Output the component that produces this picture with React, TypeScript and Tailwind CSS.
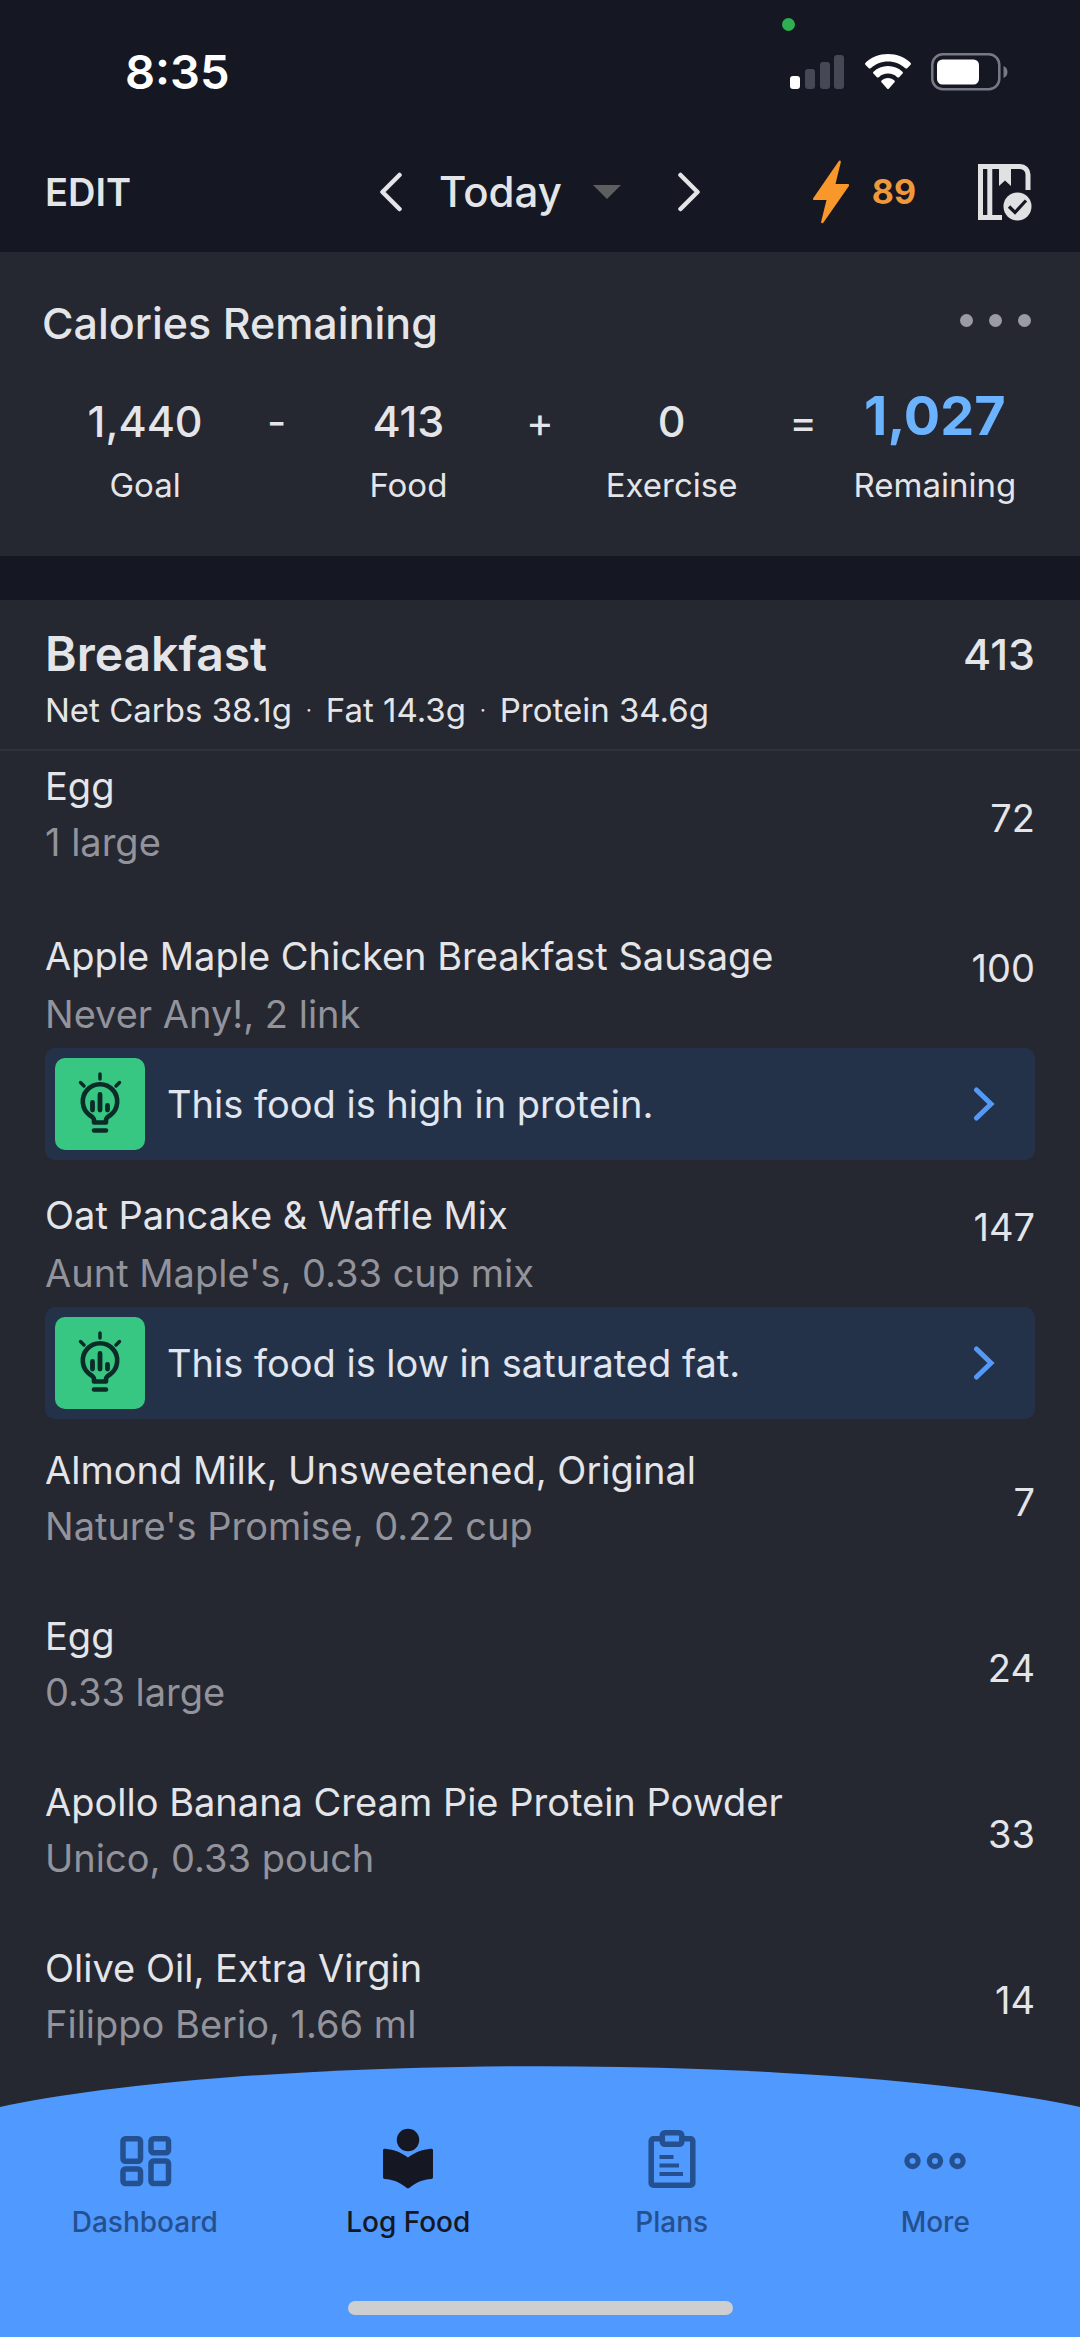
import React from "react";

type Food = {
  name: string;
  detail: string;
  calories: number;
  insight?: string;
};

const foods: Food[] = [
  { name: "Egg", detail: "1 large", calories: 72 },
  {
    name: "Apple Maple Chicken Breakfast Sausage",
    detail: "Never Any!, 2 link",
    calories: 100,
    insight: "This food is high in protein.",
  },
  {
    name: "Oat Pancake & Waffle Mix",
    detail: "Aunt Maple's, 0.33 cup mix",
    calories: 147,
    insight: "This food is low in saturated fat.",
  },
  { name: "Almond Milk, Unsweetened, Original", detail: "Nature's Promise, 0.22 cup", calories: 7 },
  { name: "Egg", detail: "0.33 large", calories: 24 },
  { name: "Apollo Banana Cream Pie Protein Powder", detail: "Unico, 0.33 pouch", calories: 33 },
  { name: "Olive Oil, Extra Virgin", detail: "Filippo Berio, 1.66 ml", calories: 14 },
];

function Chevron({ left = false }: { left?: boolean }) {
  return (
    <svg width="24" height="40" viewBox="0 0 24 40" fill="none" stroke="currentColor" strokeWidth="4.5" strokeLinecap="round" strokeLinejoin="round" aria-hidden="true">
      <path d={left ? "M20.5 3L3.5 20l17 17" : "M3.5 3l17 17-17 17"} />
    </svg>
  );
}

function StatusBar() {
  return (
    <div className="relative flex h-[136px] items-center justify-between pt-2 pr-[72px] pl-[125px]">
      <span className="text-[47px] leading-[56px] font-semibold text-white">8:35</span>
      <span className="absolute top-[18px] right-[285px] size-[13px] rounded-full bg-[#2fae53]" />
      <div className="flex items-center gap-5">
        <svg width="55" height="36" viewBox="0 0 55 36" aria-hidden="true">
          <rect x="0" y="22" width="10" height="13" rx="3" fill="#fff" />
          <rect x="15" y="15" width="10" height="20" rx="3" fill="#464855" />
          <rect x="30" y="8" width="10" height="27" rx="3" fill="#464855" />
          <rect x="44" y="1" width="10" height="34" rx="3" fill="#464855" />
        </svg>
        <svg width="46" height="36" viewBox="0 0 46 36" fill="#fff" aria-hidden="true">
          <path d="M23 0C14.200 0 6.300 3.300.5 8.700c-.6.600-.6 1.400-.1 2l3.400 3.500c.5.500 1.300.500 1.900 0C10.200 10 16.300 7.400 23 7.400s12.800 2.600 17.300 6.800c.6.500 1.400.5 1.900 0l3.400-3.500c.5-.6.500-1.400-.1-2C39.700 3.300 31.800 0 23 0z" />
          <path d="M23 12c-5.600 0-10.700 2.200-14.500 5.700-.6.500-.6 1.400-.1 1.900l3.500 3.600c.5.500 1.300.500 1.900 0 2.400-2.200 5.600-3.600 9.200-3.600s6.800 1.400 9.200 3.600c.6.500 1.400.5 1.900 0l3.500-3.600c.5-.5.5-1.400-.1-1.900C33.700 14.200 28.600 12 23 12z" />
          <path d="M23 24c-2.500 0-4.700.9-6.400 2.400-.6.500-.6 1.300-.1 1.900l5.500 6.100c.6.700 1.400.7 2 0l5.500-6.100c.5-.6.5-1.400-.1-1.900C27.700 24.900 25.500 24 23 24z" />
        </svg>
        <svg width="77" height="38" viewBox="0 0 77 38" aria-hidden="true">
          <rect x="1.300" y="1.300" width="67" height="35" rx="10.500" fill="none" stroke="#777986" strokeWidth="2.500" />
          <rect x="6" y="6.500" width="42" height="25" rx="5.500" fill="#fff" />
          <path d="M72.500 13c2.500 1 4 3.300 4 6s-1.500 5-4 6z" fill="#777986" />
        </svg>
      </div>
    </div>
  );
}

function Toolbar() {
  return (
    <div className="grid h-[116px] grid-cols-[1fr_auto_1fr] items-center px-[45px] pb-1">
      <button type="button" className="justify-self-start text-[38px] leading-[48px] font-semibold">
        EDIT
      </button>
      <div className="flex items-center">
        <button type="button" aria-label="Previous day">
          <Chevron left />
        </button>
        <button type="button" className="mr-14 ml-9 flex items-center gap-[31px] text-[42px] leading-[56px] font-medium">
          Today
          <svg width="28" height="14" viewBox="0 0 28 14" fill="#5c5e60" aria-hidden="true">
            <path d="M0 0h28L14 14z" />
          </svg>
        </button>
        <button type="button" aria-label="Next day">
          <Chevron />
        </button>
      </div>
      <div className="flex items-center gap-[62px] justify-self-end pr-[3px]">
        <button type="button" className="flex items-center gap-[23px] text-[34px] leading-[40px] font-bold text-[#f0993a]">
          <svg width="36" height="64" viewBox="0 0 36 64" fill="#f8982a" aria-hidden="true">
            <path d="M25.500 1.500c.6-1.500 2.600-1 2.300.7L22.500 24H35c1 0 1.500 1 .9 1.900L10.500 62.500c-1 1.300-2.700.6-2.300-1L13.500 40H1.200C.2 40-.3 39.100.2 38.200z" />
          </svg>
          89
        </button>
        <button type="button" aria-label="Complete diary">
          <svg width="54" height="58" viewBox="0 0 54 58" aria-hidden="true">
            <path d="M2.500 3.500H42a8 8 0 0 1 8 8V27M2.500 1v56M0 54.500h24" fill="none" stroke="#e0e1e2" strokeWidth="5" />
            <path d="M11.800 3v52" stroke="#e0e1e2" strokeWidth="5" />
            <path d="M21 2h12v21l-6-5.500-6 5.500z" fill="#e0e1e2" />
            <circle cx="39.500" cy="43.500" r="17" fill="#151722" />
            <circle cx="39.500" cy="43.500" r="14" fill="#e0e1e2" />
            <path d="M31 43.500l6 6 11-12" fill="none" stroke="#151722" strokeWidth="3.200" />
          </svg>
        </button>
      </div>
    </div>
  );
}

function Stat({ value, label, highlight = false }: { value: string; label: string; highlight?: boolean }) {
  return (
    <div className="flex flex-col items-center">
      <dd
        className={
          highlight
            ? "flex h-14 items-center pb-3 text-[54px] font-bold text-[#6cb3ff]"
            : "flex h-14 items-center text-[43px] font-medium"
        }
      >
        {value}
      </dd>
      <dt className="order-last mt-4 text-[33px] leading-[40px]">{label}</dt>
    </div>
  );
}

function Operator({ children }: { children: string }) {
  return <span className="flex h-14 items-center justify-center text-[42px]">{children}</span>;
}

function CaloriesCard() {
  return (
    <section className="bg-[#252731] px-[42px] pt-[41px] pb-[51px]">
      <div className="flex items-center justify-between">
        <h2 className="text-[43px] leading-[60px] font-medium">Calories Remaining</h2>
        <button type="button" aria-label="More options" className="flex gap-4 pr-[7px] pb-[6px]">
          <span className="size-[13px] rounded-full bg-[#9b9ca3]" />
          <span className="size-[13px] rounded-full bg-[#9b9ca3]" />
          <span className="size-[13px] rounded-full bg-[#9b9ca3]" />
        </button>
      </div>
      <dl className="mt-10 grid grid-cols-[200fr_63fr_200fr_63fr_200fr_63fr_200fr] px-[3px]">
        <Stat value="1,440" label="Goal" />
        <Operator>-</Operator>
        <Stat value="413" label="Food" />
        <Operator>+</Operator>
        <Stat value="0" label="Exercise" />
        <Operator>=</Operator>
        <Stat value="1,027" label="Remaining" highlight />
      </dl>
    </section>
  );
}

function InsightIcon() {
  return (
    <span className="flex h-[92px] w-[90px] items-center justify-center rounded-[10px] bg-[#37c783] text-[#0b2b26]">
      <svg width="46" height="64" viewBox="0 0 46 64" fill="none" stroke="currentColor" strokeLinecap="round" strokeLinejoin="round" aria-hidden="true">
        <path d="M23 2v5M3.500 10.500l3.500 3.500M42.500 10.500l-3.500 3.500" strokeWidth="3.500" />
        <path d="M17 50.500v-2.500c0-2.200-1.800-3.200-4.200-4.700A17.200 17.200 0 1 1 33.200 43.300c-2.400 1.500-4.200 2.500-4.200 4.700v2.500z" strokeWidth="4.600" />
        <path d="M15.500 30.500v7.500M23 22.500v15.500M30.500 33.500v4.500" strokeWidth="4.800" />
        <path d="M17 58.500h12" strokeWidth="4.600" />
      </svg>
    </span>
  );
}

function FoodRow({ food }: { food: Food }) {
  if (food.insight) {
    return (
      <li className="px-[45px]">
        <div className="flex justify-between pt-[26px] pb-[5px] text-[38px] leading-[58px]">
          <div>
            <h3>{food.name}</h3>
            <p className="text-[#92939b]">{food.detail}</p>
          </div>
          <span className="pt-3">{food.calories}</span>
        </div>
        <button type="button" className="flex h-28 w-full items-center rounded-[10px] bg-[#243249] pr-10 pl-[10px] text-left text-[38px] text-[#e0e6f0]">
          <InsightIcon />
          <span className="ml-[22px] flex-1">{food.insight}</span>
          <svg width="22" height="34" viewBox="0 0 22 34" fill="none" stroke="#5599f7" strokeWidth="5" strokeLinecap="round" aria-hidden="true">
            <path d="M3.500 3L18 17 3.500 31" />
          </svg>
        </button>
      </li>
    );
  }
  return (
    <li className="flex h-[166px] items-center justify-between px-[45px] text-[38px] leading-[56px]">
      <div className="pb-2">
        <h3>{food.name}</h3>
        <p className="text-[#92939b]">{food.detail}</p>
      </div>
      <span>{food.calories}</span>
    </li>
  );
}

function Macros() {
  return (
    <p className="flex items-center gap-[14px] text-[33px] leading-[52px]">
      <span>Net Carbs 38.1g</span>
      <span className="text-[20px]">·</span>
      <span>Fat 14.3g</span>
      <span className="text-[20px]">·</span>
      <span>Protein 34.6g</span>
    </p>
  );
}

function Breakfast() {
  return (
    <section className="bg-[#252731]">
      <header className="flex h-[151px] justify-between border-b-2 border-[#30323d] px-[45px] pt-6">
        <div>
          <h2 className="text-[48px] leading-[60px] font-semibold">Breakfast</h2>
          <Macros />
        </div>
        <span className="text-[43px] leading-[60px] font-medium">413</span>
      </header>
      <ul className="-mt-4">
        {foods.map((food, i) => (
          <FoodRow key={i} food={food} />
        ))}
      </ul>
    </section>
  );
}

function DashboardIcon() {
  return (
    <svg width="64" height="64" viewBox="0 0 64 64" fill="none" stroke="currentColor" strokeWidth="5.500" aria-hidden="true">
      <rect x="10" y="10.700" width="17.500" height="22.500" rx="2.500" />
      <rect x="38" y="10.700" width="17.500" height="14" rx="2.500" />
      <rect x="10" y="41" width="17.500" height="14.500" rx="2.500" />
      <rect x="38" y="33" width="17.500" height="22.500" rx="2.500" />
    </svg>
  );
}

function LogFoodIcon() {
  return (
    <svg width="64" height="64" viewBox="0 0 64 64" fill="currentColor" aria-hidden="true">
      <circle cx="32" cy="12" r="11.200" />
      <path d="M7 22.500c0-1.300.8-2 2.100-1.800C18 21.500 25.500 24.500 32 29.500c6.500-5 14-8 22.900-8.800 1.300-.2 2.100.5 2.100 1.800V49c0 1.200-.7 1.900-1.900 2-7.600.4-14.300 3-21.600 8.700-1 .8-2 .8-3 0C23.200 54 16.500 51.400 8.900 51 7.700 50.900 7 50.200 7 49z" />
    </svg>
  );
}

function PlansIcon() {
  return (
    <svg width="64" height="64" viewBox="0 0 64 64" fill="none" stroke="currentColor" strokeWidth="5.500" aria-hidden="true">
      <path d="M21 10.700H13.500a2.300 2.300 0 0 0-2.300 2.300v42a2.300 2.300 0 0 0 2.300 2.300h37a2.300 2.300 0 0 0 2.300-2.300V13a2.300 2.300 0 0 0-2.300-2.300H43" />
      <rect x="22.300" y="4.700" width="19.500" height="11.500" rx="2.500" />
      <path d="M19.500 29h14M19.500 37.500H39M19.500 46h23.500" strokeWidth="4.200" />
    </svg>
  );
}

function MoreIcon() {
  return (
    <svg width="64" height="64" viewBox="0 0 64 64" fill="none" stroke="currentColor" strokeWidth="5.200" aria-hidden="true">
      <circle cx="9.500" cy="33" r="5.600" />
      <circle cx="32" cy="33" r="5.600" />
      <circle cx="54.500" cy="33" r="5.600" />
    </svg>
  );
}

const tabs = [
  { label: "Dashboard", Icon: DashboardIcon, active: false },
  { label: "Log Food", Icon: LogFoodIcon, active: true },
  { label: "Plans", Icon: PlansIcon, active: false },
  { label: "More", Icon: MoreIcon, active: false },
];

function TabBar() {
  return (
    <nav className="relative -mt-5">
      <svg className="block h-[41px] w-full" viewBox="0 0 1080 41" preserveAspectRatio="none" aria-hidden="true">
        <path d="M0 41A640 88 0 0 1 1080 41z" fill="#4f99ff" />
      </svg>
      <div className="bg-[#4f99ff] pt-[21px] pb-[22px]">
        <div className="grid grid-cols-4 px-[13px]">
          {tabs.map(({ label, Icon, active }) => (
            <a
              key={label}
              href="#"
              aria-current={active ? "page" : undefined}
              className={
                active
                  ? "flex flex-col items-center gap-3 text-[28px] leading-[36px] font-medium text-[#151722]"
                  : "flex flex-col items-center gap-3 text-[28px] leading-[36px] font-medium text-[#25508f]"
              }
            >
              <Icon />
              {label}
            </a>
          ))}
        </div>
        <div className="mx-auto mt-[61px] h-[14px] w-[385px] rounded-full bg-[#cdcecf]" />
      </div>
    </nav>
  );
}

export default function App() {
  return (
    <div className="flex min-h-screen flex-col bg-[#252731] font-['Inter',sans-serif] text-[#e4e5e8]">
      <header className="bg-[#151722]">
        <StatusBar />
        <Toolbar />
      </header>
      <main className="flex-1">
        <div className="border-b-[44px] border-[#151722]">
          <CaloriesCard />
        </div>
        <Breakfast />
      </main>
      <TabBar />
    </div>
  );
}
